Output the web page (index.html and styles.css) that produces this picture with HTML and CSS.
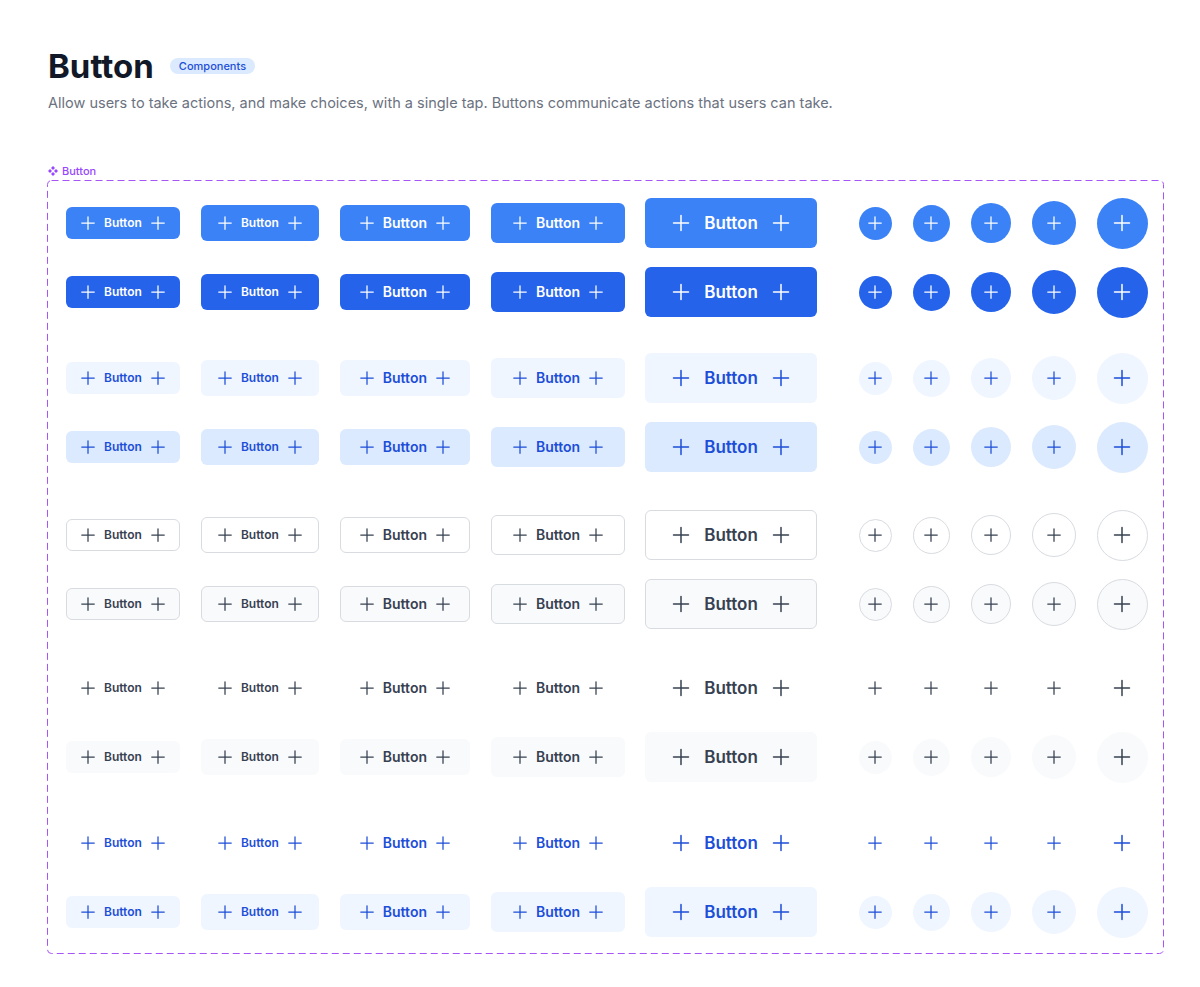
FILE: index.html
```html
<!DOCTYPE html>
<html lang="en">
<head>
    <meta charset="UTF-8">
    <meta name="viewport" content="width=device-width, initial-scale=1.0">
    <title>Button</title>
    <link rel="stylesheet" href="styles.css">
</head>
<body>

<svg class="sprite" aria-hidden="true">
    <symbol id="plus" viewBox="0 0 24 24">
        <path d="M12 4.5v15m7.5-7.5h-15" fill="none" stroke="currentColor" stroke-width="1.5" stroke-linecap="round"/>
    </symbol>
</svg>

<div class="page">
    <div class="title-row">
        <h1>Button</h1>
        <span class="badge">Components</span>
    </div>
    <p class="lead">Allow users to take actions, and make choices, with a single tap. Buttons communicate actions that users can take.</p>

    <div class="frame-label">
        <svg class="comp-icon" viewBox="0 0 10 10"><path d="M5 0l2 2-2 2-2-2zM2 3l2 2-2 2-2-2zM8 3l2 2-2 2-2-2zM5 6l2 2-2 2-2-2z" fill="currentColor"/></svg>
        Button
    </div>

    <div class="frame">
        <svg class="dashes" aria-hidden="true"><rect x="0.5" y="0.5" rx="4" ry="4"/></svg>

        <div class="group">
            <div class="row primary">
                <button class="btn xs"><svg class="ic"><use href="#plus"/></svg>Button<svg class="ic"><use href="#plus"/></svg></button>
                <button class="btn sm"><svg class="ic"><use href="#plus"/></svg>Button<svg class="ic"><use href="#plus"/></svg></button>
                <button class="btn md"><svg class="ic"><use href="#plus"/></svg>Button<svg class="ic"><use href="#plus"/></svg></button>
                <button class="btn lg"><svg class="ic"><use href="#plus"/></svg>Button<svg class="ic"><use href="#plus"/></svg></button>
                <button class="btn xl"><svg class="ic big"><use href="#plus"/></svg>Button<svg class="ic big"><use href="#plus"/></svg></button>
                <button class="round c1"><svg class="ic"><use href="#plus"/></svg></button>
                <button class="round c2"><svg class="ic"><use href="#plus"/></svg></button>
                <button class="round c3"><svg class="ic"><use href="#plus"/></svg></button>
                <button class="round c4"><svg class="ic"><use href="#plus"/></svg></button>
                <button class="round c5"><svg class="ic big"><use href="#plus"/></svg></button>
            </div>
            <div class="row primary-dark">
                <button class="btn xs"><svg class="ic"><use href="#plus"/></svg>Button<svg class="ic"><use href="#plus"/></svg></button>
                <button class="btn sm"><svg class="ic"><use href="#plus"/></svg>Button<svg class="ic"><use href="#plus"/></svg></button>
                <button class="btn md"><svg class="ic"><use href="#plus"/></svg>Button<svg class="ic"><use href="#plus"/></svg></button>
                <button class="btn lg"><svg class="ic"><use href="#plus"/></svg>Button<svg class="ic"><use href="#plus"/></svg></button>
                <button class="btn xl"><svg class="ic big"><use href="#plus"/></svg>Button<svg class="ic big"><use href="#plus"/></svg></button>
                <button class="round c1"><svg class="ic"><use href="#plus"/></svg></button>
                <button class="round c2"><svg class="ic"><use href="#plus"/></svg></button>
                <button class="round c3"><svg class="ic"><use href="#plus"/></svg></button>
                <button class="round c4"><svg class="ic"><use href="#plus"/></svg></button>
                <button class="round c5"><svg class="ic big"><use href="#plus"/></svg></button>
            </div>
        </div>

        <div class="group">
            <div class="row soft">
                <button class="btn xs"><svg class="ic"><use href="#plus"/></svg>Button<svg class="ic"><use href="#plus"/></svg></button>
                <button class="btn sm"><svg class="ic"><use href="#plus"/></svg>Button<svg class="ic"><use href="#plus"/></svg></button>
                <button class="btn md"><svg class="ic"><use href="#plus"/></svg>Button<svg class="ic"><use href="#plus"/></svg></button>
                <button class="btn lg"><svg class="ic"><use href="#plus"/></svg>Button<svg class="ic"><use href="#plus"/></svg></button>
                <button class="btn xl"><svg class="ic big"><use href="#plus"/></svg>Button<svg class="ic big"><use href="#plus"/></svg></button>
                <button class="round c1"><svg class="ic"><use href="#plus"/></svg></button>
                <button class="round c2"><svg class="ic"><use href="#plus"/></svg></button>
                <button class="round c3"><svg class="ic"><use href="#plus"/></svg></button>
                <button class="round c4"><svg class="ic"><use href="#plus"/></svg></button>
                <button class="round c5"><svg class="ic big"><use href="#plus"/></svg></button>
            </div>
            <div class="row soft-dark">
                <button class="btn xs"><svg class="ic"><use href="#plus"/></svg>Button<svg class="ic"><use href="#plus"/></svg></button>
                <button class="btn sm"><svg class="ic"><use href="#plus"/></svg>Button<svg class="ic"><use href="#plus"/></svg></button>
                <button class="btn md"><svg class="ic"><use href="#plus"/></svg>Button<svg class="ic"><use href="#plus"/></svg></button>
                <button class="btn lg"><svg class="ic"><use href="#plus"/></svg>Button<svg class="ic"><use href="#plus"/></svg></button>
                <button class="btn xl"><svg class="ic big"><use href="#plus"/></svg>Button<svg class="ic big"><use href="#plus"/></svg></button>
                <button class="round c1"><svg class="ic"><use href="#plus"/></svg></button>
                <button class="round c2"><svg class="ic"><use href="#plus"/></svg></button>
                <button class="round c3"><svg class="ic"><use href="#plus"/></svg></button>
                <button class="round c4"><svg class="ic"><use href="#plus"/></svg></button>
                <button class="round c5"><svg class="ic big"><use href="#plus"/></svg></button>
            </div>
        </div>

        <div class="group bordered">
            <div class="row outline">
                <button class="btn xs"><svg class="ic"><use href="#plus"/></svg>Button<svg class="ic"><use href="#plus"/></svg></button>
                <button class="btn sm"><svg class="ic"><use href="#plus"/></svg>Button<svg class="ic"><use href="#plus"/></svg></button>
                <button class="btn md"><svg class="ic"><use href="#plus"/></svg>Button<svg class="ic"><use href="#plus"/></svg></button>
                <button class="btn lg"><svg class="ic"><use href="#plus"/></svg>Button<svg class="ic"><use href="#plus"/></svg></button>
                <button class="btn xl"><svg class="ic big"><use href="#plus"/></svg>Button<svg class="ic big"><use href="#plus"/></svg></button>
                <button class="round c1"><svg class="ic"><use href="#plus"/></svg></button>
                <button class="round c2"><svg class="ic"><use href="#plus"/></svg></button>
                <button class="round c3"><svg class="ic"><use href="#plus"/></svg></button>
                <button class="round c4"><svg class="ic"><use href="#plus"/></svg></button>
                <button class="round c5"><svg class="ic big"><use href="#plus"/></svg></button>
            </div>
            <div class="row outline-fill">
                <button class="btn xs"><svg class="ic"><use href="#plus"/></svg>Button<svg class="ic"><use href="#plus"/></svg></button>
                <button class="btn sm"><svg class="ic"><use href="#plus"/></svg>Button<svg class="ic"><use href="#plus"/></svg></button>
                <button class="btn md"><svg class="ic"><use href="#plus"/></svg>Button<svg class="ic"><use href="#plus"/></svg></button>
                <button class="btn lg"><svg class="ic"><use href="#plus"/></svg>Button<svg class="ic"><use href="#plus"/></svg></button>
                <button class="btn xl"><svg class="ic big"><use href="#plus"/></svg>Button<svg class="ic big"><use href="#plus"/></svg></button>
                <button class="round c1"><svg class="ic"><use href="#plus"/></svg></button>
                <button class="round c2"><svg class="ic"><use href="#plus"/></svg></button>
                <button class="round c3"><svg class="ic"><use href="#plus"/></svg></button>
                <button class="round c4"><svg class="ic"><use href="#plus"/></svg></button>
                <button class="round c5"><svg class="ic big"><use href="#plus"/></svg></button>
            </div>
        </div>

        <div class="group">
            <div class="row ghost">
                <button class="btn xs"><svg class="ic"><use href="#plus"/></svg>Button<svg class="ic"><use href="#plus"/></svg></button>
                <button class="btn sm"><svg class="ic"><use href="#plus"/></svg>Button<svg class="ic"><use href="#plus"/></svg></button>
                <button class="btn md"><svg class="ic"><use href="#plus"/></svg>Button<svg class="ic"><use href="#plus"/></svg></button>
                <button class="btn lg"><svg class="ic"><use href="#plus"/></svg>Button<svg class="ic"><use href="#plus"/></svg></button>
                <button class="btn xl"><svg class="ic big"><use href="#plus"/></svg>Button<svg class="ic big"><use href="#plus"/></svg></button>
                <button class="round c1"><svg class="ic"><use href="#plus"/></svg></button>
                <button class="round c2"><svg class="ic"><use href="#plus"/></svg></button>
                <button class="round c3"><svg class="ic"><use href="#plus"/></svg></button>
                <button class="round c4"><svg class="ic"><use href="#plus"/></svg></button>
                <button class="round c5"><svg class="ic big"><use href="#plus"/></svg></button>
            </div>
            <div class="row ghost-fill">
                <button class="btn xs"><svg class="ic"><use href="#plus"/></svg>Button<svg class="ic"><use href="#plus"/></svg></button>
                <button class="btn sm"><svg class="ic"><use href="#plus"/></svg>Button<svg class="ic"><use href="#plus"/></svg></button>
                <button class="btn md"><svg class="ic"><use href="#plus"/></svg>Button<svg class="ic"><use href="#plus"/></svg></button>
                <button class="btn lg"><svg class="ic"><use href="#plus"/></svg>Button<svg class="ic"><use href="#plus"/></svg></button>
                <button class="btn xl"><svg class="ic big"><use href="#plus"/></svg>Button<svg class="ic big"><use href="#plus"/></svg></button>
                <button class="round c1"><svg class="ic"><use href="#plus"/></svg></button>
                <button class="round c2"><svg class="ic"><use href="#plus"/></svg></button>
                <button class="round c3"><svg class="ic"><use href="#plus"/></svg></button>
                <button class="round c4"><svg class="ic"><use href="#plus"/></svg></button>
                <button class="round c5"><svg class="ic big"><use href="#plus"/></svg></button>
            </div>
        </div>

        <div class="group">
            <div class="row link">
                <button class="btn xs"><svg class="ic"><use href="#plus"/></svg>Button<svg class="ic"><use href="#plus"/></svg></button>
                <button class="btn sm"><svg class="ic"><use href="#plus"/></svg>Button<svg class="ic"><use href="#plus"/></svg></button>
                <button class="btn md"><svg class="ic"><use href="#plus"/></svg>Button<svg class="ic"><use href="#plus"/></svg></button>
                <button class="btn lg"><svg class="ic"><use href="#plus"/></svg>Button<svg class="ic"><use href="#plus"/></svg></button>
                <button class="btn xl"><svg class="ic big"><use href="#plus"/></svg>Button<svg class="ic big"><use href="#plus"/></svg></button>
                <button class="round c1"><svg class="ic"><use href="#plus"/></svg></button>
                <button class="round c2"><svg class="ic"><use href="#plus"/></svg></button>
                <button class="round c3"><svg class="ic"><use href="#plus"/></svg></button>
                <button class="round c4"><svg class="ic"><use href="#plus"/></svg></button>
                <button class="round c5"><svg class="ic big"><use href="#plus"/></svg></button>
            </div>
            <div class="row link-fill">
                <button class="btn xs"><svg class="ic"><use href="#plus"/></svg>Button<svg class="ic"><use href="#plus"/></svg></button>
                <button class="btn sm"><svg class="ic"><use href="#plus"/></svg>Button<svg class="ic"><use href="#plus"/></svg></button>
                <button class="btn md"><svg class="ic"><use href="#plus"/></svg>Button<svg class="ic"><use href="#plus"/></svg></button>
                <button class="btn lg"><svg class="ic"><use href="#plus"/></svg>Button<svg class="ic"><use href="#plus"/></svg></button>
                <button class="btn xl"><svg class="ic big"><use href="#plus"/></svg>Button<svg class="ic big"><use href="#plus"/></svg></button>
                <button class="round c1"><svg class="ic"><use href="#plus"/></svg></button>
                <button class="round c2"><svg class="ic"><use href="#plus"/></svg></button>
                <button class="round c3"><svg class="ic"><use href="#plus"/></svg></button>
                <button class="round c4"><svg class="ic"><use href="#plus"/></svg></button>
                <button class="round c5"><svg class="ic big"><use href="#plus"/></svg></button>
            </div>
        </div>
    </div>
</div>

</body>
</html>
```

FILE: styles.css
```css
* {
    box-sizing: border-box;
}
body {
    margin: 0;
    background-color: #fff;
    font-family: Inter, "Noto Sans", sans-serif;
    color: #111827;
}
.sprite {
    display: none;
}
.page {
    padding: 46px 47px;
}

/* header */
.title-row {
    display: flex;
    align-items: center;
    gap: 16px;
    padding-left: 1px;
}
h1 {
    margin: 0;
    font-size: 33px;
    line-height: 40px;
    font-weight: 700;
}
.badge {
    height: 16px;
    padding: 0 9px;
    border-radius: 8px;
    background-color: #dbeafe;
    color: #1d4ed8;
    font-size: 11px;
    line-height: 16px;
    font-weight: 500;
}
.lead {
    margin: 6px 0 0 1px;
    font-size: 14.5px;
    line-height: 22px;
    color: #6b7280;
}

/* component frame */
.frame-label {
    display: flex;
    align-items: center;
    gap: 4px;
    margin: 50px 0 0 1px;
    height: 14px;
    font-size: 11px;
    font-weight: 500;
    color: #9747ff;
}
.comp-icon {
    width: 10px;
    height: 10px;
}
.frame {
    position: relative;
    width: 1117px;
    margin-top: 2px;
    padding: 17px 14px 16px 19px;
    display: flex;
    flex-direction: column;
    gap: 34px;
}
.dashes {
    position: absolute;
    inset: 0;
    width: 100%;
    height: 100%;
    pointer-events: none;
}
.dashes rect {
    width: calc(100% - 1px);
    height: calc(100% - 1px);
    fill: none;
    stroke: #a855f7;
    stroke-width: 1;
    stroke-dasharray: 7 4;
}
.group {
    display: flex;
    flex-direction: column;
    gap: 17px;
}
.group.bordered {
    padding-top: 2px;
    margin-bottom: -2px;
}
.row {
    display: flex;
    align-items: center;
    gap: 21px;
    height: 52px;
}

/* buttons */
.btn, .round {
    display: inline-flex;
    align-items: center;
    justify-content: center;
    flex: none;
    margin: 0;
    border: 1px solid transparent;
    background: transparent;
    color: inherit;
    font-family: inherit;
    font-weight: 600;
    line-height: 1;
    cursor: pointer;
}
.btn {
    border-radius: 6px;
    gap: 6px;
}
.ic {
    width: 20px;
    height: 20px;
    flex: none;
}
.ic.big {
    width: 24px;
    height: 24px;
}
.xs {
    height: 32px;
    padding: 0 11px;
    font-size: 12px;
}
.sm {
    height: 36px;
    padding: 0 13px;
    font-size: 12px;
}
.md {
    height: 36px;
    padding: 0 16px;
    font-size: 14px;
}
.lg {
    height: 40px;
    padding: 0 18px;
    font-size: 14px;
}
.xl {
    height: 50px;
    padding: 0 23px;
    gap: 11px;
    font-size: 17px;
    margin-left: -1px;
    margin-right: 21px;
}
.round {
    padding: 0;
    border-radius: 50%;
}
.c1 { width: 33px; height: 33px; }
.c2 { width: 37px; height: 37px; }
.c3 { width: 40px; height: 40px; }
.c4 { width: 44px; height: 44px; }
.c5 { width: 51px; height: 51px; }

/* variants */
.primary {
    color: #fff;
}
.primary .btn, .primary .round {
    background-color: #3b82f6;
}
.primary-dark {
    color: #fff;
}
.primary-dark .btn, .primary-dark .round {
    background-color: #2563eb;
}
.soft, .soft-dark, .link, .link-fill {
    color: #1d4ed8;
}
.soft .btn, .soft .round, .link-fill .btn, .link-fill .round {
    background-color: #eff6ff;
}
.soft-dark .btn, .soft-dark .round {
    background-color: #dbeafe;
}
.outline, .outline-fill, .ghost, .ghost-fill {
    color: #374151;
}
.outline .btn, .outline .round {
    background-color: #fff;
    border-color: #d8dbe0;
}
.outline-fill .btn, .outline-fill .round {
    background-color: #f9fafb;
    border-color: #d8dbe0;
}
.ghost-fill .btn, .ghost-fill .round {
    background-color: #f9fafb;
}
```
